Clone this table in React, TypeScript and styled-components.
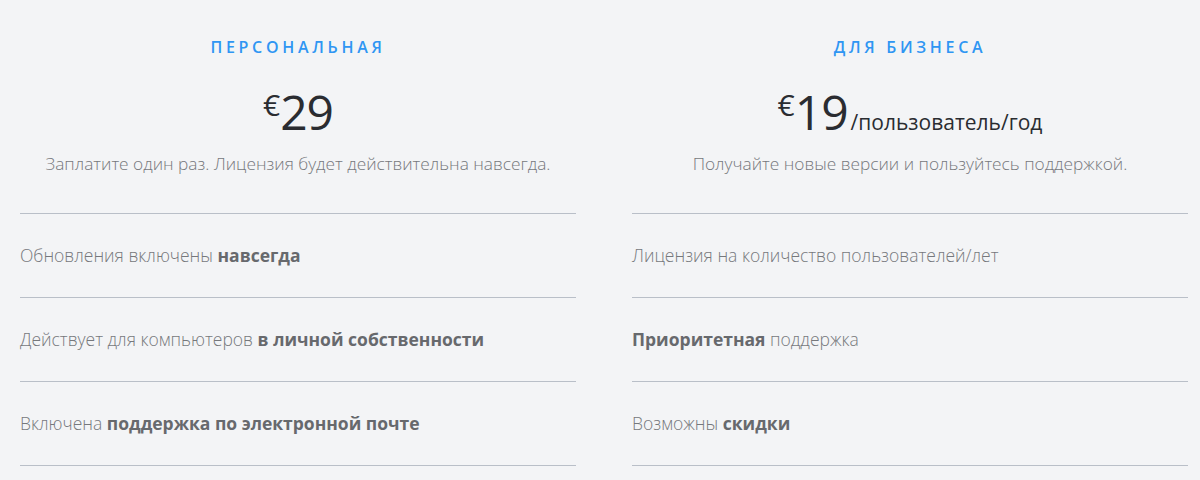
import styled, { createGlobalStyle } from "styled-components";

const GlobalStyle = createGlobalStyle`
  html, body {
    margin: 0;
    padding: 0;
    background: #f3f4f6;
  }
  body {
    font-family: "Open Sans", "Noto Sans", sans-serif;
    -webkit-font-smoothing: antialiased;
  }
`;

const Page = styled.main`
  display: grid;
  grid-template-columns: 556px 556px;
  column-gap: 56px;
  padding: 29px 12px 0 20px;
  height: 480px;
  box-sizing: border-box;
  overflow: hidden;
`;

const Plan = styled.section`
  display: flex;
  flex-direction: column;
`;

const Header = styled.header`
  display: flex;
  flex-direction: column;
  align-items: center;
  text-align: center;
  height: 185px;
  box-sizing: border-box;
  border-bottom: 1px solid #b9bfc8;
`;

const Label = styled.h2`
  margin: 0;
  font-size: 16px;
  line-height: 36px;
  font-weight: 600;
  letter-spacing: 3.7px;
  color: #2f96f3;
`;

const Price = styled.div`
  margin-top: 10px;
  height: 60px;
  line-height: 60px;
  color: #2a2c31;
  white-space: nowrap;
`;

const Currency = styled.span`
  font-size: 30px;
  font-weight: 500;
  vertical-align: 14px;
`;

const Amount = styled.span`
  font-size: 48px;
  font-weight: 500;
  letter-spacing: -1px;
`;

const Period = styled.span`
  margin-left: 3px;
  font-size: 21px;
  font-weight: 500;
`;

const Note = styled.p`
  margin: 16px 0 0;
  font-size: 17.3px;
  font-weight: 300;
  line-height: 26px;
  color: #76787c;
`;

const Features = styled.ul`
  list-style: none;
  margin: 0;
  padding: 0;
`;

const Feature = styled.li`
  height: 83px;
  line-height: 83px;
  border-bottom: 1px solid #b9bfc8;
  font-size: 17.5px;
  font-weight: 300;
  color: #76787c;
  white-space: nowrap;

  & strong {
    font-weight: 700;
    color: #67696d;
  }
`;

type PlanData = {
  label: string;
  amount: string;
  period?: string;
  note: string;
  features: React.ReactNode[];
};

const plans: PlanData[] = [
  {
    label: "ПЕРСОНАЛЬНАЯ",
    amount: "29",
    note: "Заплатите один раз. Лицензия будет действительна навсегда.",
    features: [
      <>Обновления включены <strong>навсегда</strong></>,
      <>Действует для компьютеров <strong>в личной собственности</strong></>,
      <>Включена <strong>поддержка по электронной почте</strong></>,
    ],
  },
  {
    label: "ДЛЯ БИЗНЕСА",
    amount: "19",
    period: "/пользователь/год",
    note: "Получайте новые версии и пользуйтесь поддержкой.",
    features: [
      <>Лицензия на количество пользователей/лет</>,
      <><strong>Приоритетная</strong> поддержка</>,
      <>Возможны <strong>скидки</strong></>,
    ],
  },
];

export default function App() {
  return (
    <>
      <GlobalStyle />
      <Page>
        {plans.map((plan) => (
          <Plan key={plan.label}>
            <Header>
              <Label>{plan.label}</Label>
              <Price>
                <Currency>€</Currency>
                <Amount>{plan.amount}</Amount>
                {plan.period && <Period>{plan.period}</Period>}
              </Price>
              <Note>{plan.note}</Note>
            </Header>
            <Features>
              {plan.features.map((f, i) => (
                <Feature key={i}>{f}</Feature>
              ))}
            </Features>
          </Plan>
        ))}
      </Page>
    </>
  );
}
